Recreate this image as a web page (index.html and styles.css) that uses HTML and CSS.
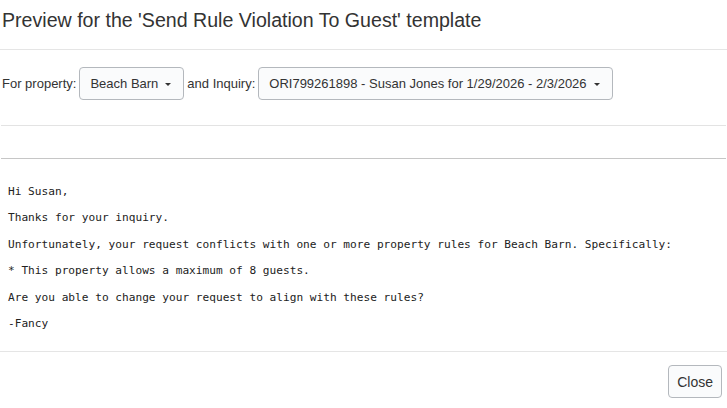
FILE: index.html
```html
<!DOCTYPE html>
<html>
<head>
<meta charset="utf-8">
<link rel="stylesheet" href="styles.css">
</head>
<body>
<div class="modal">
  <div class="modal-header">
    <h4 class="title">Preview for the 'Send Rule Violation To Guest' template</h4>
  </div>
  <div class="controls">
    <span class="label">For property:</span>
    <button class="dropdown">Beach Barn <span class="caret"></span></button>
    <span class="label">and Inquiry:</span>
    <button class="dropdown">ORI799261898 - Susan Jones for 1/29/2026 - 2/3/2026 <span class="caret"></span></button>
  </div>
  <div class="spacer"></div>
  <div class="message">
    <p>Hi Susan,</p>
    <p>Thanks for your inquiry.</p>
    <p>Unfortunately, your request conflicts with one or more property rules for Beach Barn. Specifically:</p>
    <p>* This property allows a maximum of 8 guests.</p>
    <p>Are you able to change your request to align with these rules?</p>
    <p>-Fancy</p>
  </div>
  <div class="modal-footer">
    <button class="btn">Close</button>
  </div>
</div>
</body>
</html>
```
FILE: styles.css
```css
html, body {
  margin: 0;
  padding: 0;
  background: #ffffff;
}
body {
  font-family: "Liberation Sans", Arial, sans-serif;
  color: #333333;
}
.modal {
  width: 727px;
}
.modal-header {
  padding: 5px 2px 14px;
  border-bottom: 1px solid #e5e5e5;
}
.title {
  margin: 0;
  font-size: 19.6px;
  font-weight: normal;
  line-height: 30px;
  color: #333333;
}
.controls {
  display: flex;
  align-items: center;
  gap: 3px;
  padding: 17px 1px 25px;
  margin: 0 1px;
  border-bottom: 1px solid #e3e3e3;
  font-size: 13px;
}
.label {
  color: #333333;
}
.dropdown {
  display: inline-flex;
  align-items: center;
  gap: 7px;
  height: 33px;
  padding: 0 12px 0 10px;
  font-family: "Liberation Sans", Arial, sans-serif;
  font-size: 13px;
  color: #333333;
  background: #fafbfc;
  border: 1px solid #b4b8bd;
  border-radius: 4px;
}
.caret {
  display: inline-block;
  width: 0;
  height: 0;
  border-left: 3px solid transparent;
  border-right: 3px solid transparent;
  border-top: 3px solid #333333;
  margin-top: 1px;
}
.spacer {
  height: 32px;
  margin: 0 1px;
  border-bottom: 1px solid #c6c6c6;
}
.message {
  padding: 25px 8px 9px;
  font-family: "DejaVu Sans Mono", "Liberation Mono", monospace;
  font-size: 11.15px;
  color: #222222;
}
.message p {
  margin: 0 0 10.4px;
  line-height: 16px;
  white-space: pre;
}
.modal-footer {
  display: flex;
  justify-content: flex-end;
  padding: 13px 5px 11px;
  border-top: 1px solid #e5e5e5;
}
.btn {
  height: 33px;
  padding: 0 8px;
  font-family: "Liberation Sans", Arial, sans-serif;
  font-size: 14px;
  color: #333333;
  background: #fafbfc;
  border: 1px solid #b4b8bd;
  border-radius: 4px;
}
```
